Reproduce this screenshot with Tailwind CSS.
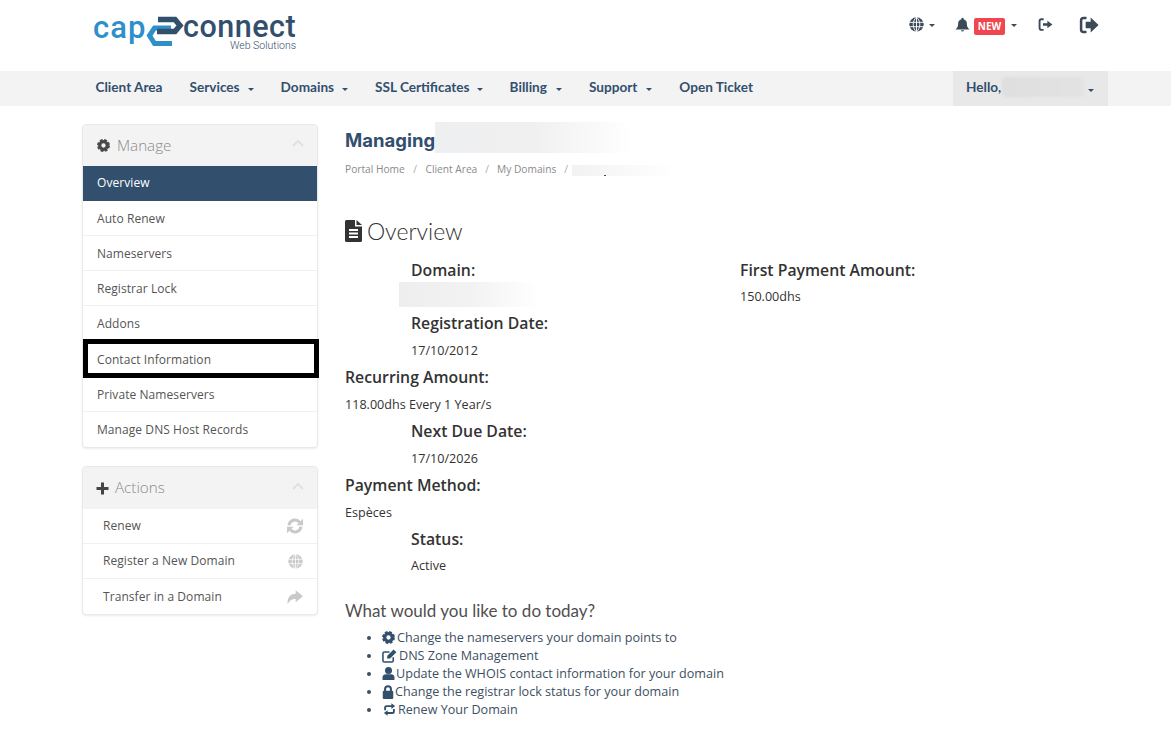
<!DOCTYPE html>
<html lang="en">

<head>
    <meta charset="UTF-8">
    <meta name="viewport" content="width=device-width, initial-scale=1.0">
    <title>Domain Details</title>
    <script src="https://cdn.jsdelivr.net/npm/@tailwindcss/browser@4"></script>
</head>

<body class="bg-white font-['Open_Sans',sans-serif] text-[12.6px] text-[#333] overflow-hidden h-[751px]">

    <!-- Header -->
    <header class="h-[71px]">
        <div class="ml-[82px] w-[1026px] h-full flex justify-between">
            <!-- Logo -->
            <div class="flex pl-[11px] pt-[7px] h-[60px] w-[240px]">
                <span class="font-['Roboto',sans-serif] font-medium text-[31px] leading-[42px] text-[#2e8fcb] tracking-[1px] w-[52px]">cap</span>
                <svg class="w-[38px] h-[34px] mt-[8px] ml-[1px] shrink-0" viewBox="146 16 38 34">
                    <path d="M172 44.500H154.500L149.500 36.500L154.500 29H171" fill="none" stroke="#2e8fcb" stroke-width="5"/>
                    <path d="M158 20.500H175L180 26.500L175 32.500H157" fill="none" stroke="#324f6e" stroke-width="5.500"/>
                </svg>
                <div class="relative">
                    <span class="font-['Roboto',sans-serif] font-medium text-[30.500px] leading-[20px] mt-[10px] text-[#324f6e] tracking-[0.5px] block -ml-[1px]">connect</span>
                    <span class="absolute left-[46px] top-[33px] font-['Roboto',sans-serif] font-light text-[10.500px] leading-[12px] text-[#324f6e] whitespace-nowrap">Web Solutions</span>
                </div>
            </div>
            <!-- Top icons -->
            <div class="flex items-start pt-[17px] pr-[9px] text-[#324f6e]">
                <svg class="w-[15px] h-[15px]" viewBox="0 0 24 24">
                    <circle cx="12" cy="12" r="11.500" fill="#3c4a58"/>
                    <path d="M0 8.500H24M0 15.500H24M12 0V24M12 0C5 7 5 17 12 24M12 0C19 7 19 17 12 24" fill="none" stroke="#fff" stroke-width="1.500"/>
                </svg>
                <span class="w-0 h-0 border-x-[3px] border-x-transparent border-t-[3px] border-t-[#3c4a58] ml-[5px] mt-[7px]"></span>
                <svg class="w-[15px] h-[15px] ml-[20px]" viewBox="0 0 24 24" fill="#3c4a58">
                    <path d="M12 1a1.800 1.800 0 0 0-1.800 1.800v.7A7.500 7.500 0 0 0 5 11c0 5-2 6.500-4 8.500V20h22v-.5c-2-2-4-3.500-4-8.500a7.500 7.500 0 0 0-5.200-7.500v-.7A1.800 1.800 0 0 0 12 1zM9.300 21a2.800 2.800 0 0 0 5.400 0z"/>
                </svg>
                <span class="ml-[4px] mt-[1px] w-[31px] h-[17px] rounded-[2px] bg-[#ef4650] text-white text-[10px] font-bold leading-[17px] text-center">NEW</span>
                <span class="w-0 h-0 border-x-[3px] border-x-transparent border-t-[3px] border-t-[#3c4a58] ml-[6px] mt-[7px]"></span>
                <svg class="w-[15px] h-[15px] ml-[21px]" viewBox="0 0 24 24">
                    <path d="M9 3.500H5.500A3 3 0 0 0 2.500 6.500V17.500A3 3 0 0 0 5.500 20.500H9" fill="none" stroke="#3c4a58" stroke-width="3"/>
                    <path d="M8 10H15V6L23 12L15 18V14H8z" fill="#3c4a58"/>
                </svg>
                <svg class="w-[20px] h-[20px] ml-[26px] -mt-[2px]" viewBox="0 0 24 24">
                    <path d="M9 3.500H5.500A3 3 0 0 0 2.500 6.500V17.500A3 3 0 0 0 5.500 20.500H9" fill="none" stroke="#3c4a58" stroke-width="3"/>
                    <path d="M8 8H14V3L23.500 12L14 21V16H8z" fill="#3c4a58"/>
                </svg>
            </div>
        </div>
    </header>

    <!-- Navbar -->
    <nav class="h-[35px] bg-[#f3f3f3]">
        <div class="ml-[82px] w-[1026px] h-full flex justify-between font-['Lato',sans-serif] font-bold text-[13.600px] text-[#324f6e]">
            <ul class="flex">
                <li class="px-[13.500px] leading-[33px]">Client Area</li>
                <li class="px-[13.500px] leading-[33px] flex items-start">Services<span class="w-0 h-0 border-x-[3px] border-x-transparent border-t-[3px] border-t-[#324f6e] ml-[8px] mt-[17px]"></span></li>
                <li class="px-[13.500px] leading-[33px] flex items-start">Domains<span class="w-0 h-0 border-x-[3px] border-x-transparent border-t-[3px] border-t-[#324f6e] ml-[8px] mt-[17px]"></span></li>
                <li class="px-[13.500px] leading-[33px] flex items-start">SSL Certificates<span class="w-0 h-0 border-x-[3px] border-x-transparent border-t-[3px] border-t-[#324f6e] ml-[7px] mt-[17px]"></span></li>
                <li class="px-[13.500px] leading-[33px] flex items-start">Billing<span class="w-0 h-0 border-x-[3px] border-x-transparent border-t-[3px] border-t-[#324f6e] ml-[9px] mt-[17px]"></span></li>
                <li class="px-[13.500px] leading-[33px] flex items-start">Support<span class="w-0 h-0 border-x-[3px] border-x-transparent border-t-[3px] border-t-[#324f6e] ml-[9px] mt-[17px]"></span></li>
                <li class="px-[13.500px] leading-[33px]">Open Ticket</li>
            </ul>
            <div class="w-[155px] bg-[#e8e8e8] flex items-start pl-[13px] pr-[14px] leading-[33px]">
                <span>Hello,</span>
                <span class="w-[82px] h-[20px] mt-[6px] ml-[1px] rounded-sm bg-linear-to-r from-[#dfdfe0] to-[#e3e3e3] blur-[1px]"></span>
                <span class="w-0 h-0 border-x-[3px] border-x-transparent border-t-[3px] border-t-[#324f6e] ml-auto mt-[18px]"></span>
            </div>
        </div>
    </nav>

    <div class="ml-[82px] w-[1026px] flex pt-[18px]">

        <!-- Sidebar -->
        <aside class="w-[236px] shrink-0">
            <div class="border border-[#e9e9e9] rounded-[4px] shadow-[0_1px_2px_rgba(0,0,0,0.08)] bg-white">
                <div class="h-[41px] bg-[#f3f3f3] flex items-center pl-[14px] pr-[13px] rounded-t-[4px]">
                    <svg class="w-[13px] h-[13px]" viewBox="0 0 24 24">
                        <circle cx="12" cy="12" r="7" fill="none" stroke="#4a4a4a" stroke-width="6"/>
                        <circle cx="12" cy="12" r="10" fill="none" stroke="#4a4a4a" stroke-width="4" stroke-dasharray="5 2.850"/>
                    </svg>
                    <span class="ml-[7px] text-[15.200px] text-[#8a8a8a] font-light">Manage</span>
                    <svg class="w-[12px] h-[8px] ml-auto -mt-[5px]" viewBox="0 0 12 8"><path d="M1 7L6 2L11 7" fill="none" stroke="#e0e0e0" stroke-width="2"/></svg>
                </div>
                <ul class="text-[#555] text-[12px] tracking-[0.07px]">
                    <li class="h-[35px] bg-[#324f6e] text-white leading-[33px] pl-[14px]">Overview</li>
                    <li class="h-[35px] leading-[35px] pl-[14px] border-b border-[#f0f0f0]">Auto Renew</li>
                    <li class="h-[35px] leading-[35px] pl-[14px] border-b border-[#f0f0f0]">Nameservers</li>
                    <li class="h-[35px] leading-[35px] pl-[14px] border-b border-[#f0f0f0]">Registrar Lock</li>
                    <li class="h-[35px] leading-[35px] pl-[14px] border-b border-[#f0f0f0]">Addons</li>
                    <li class="relative h-[36px] leading-[37px] pl-[14px]">Contact Information
                        <span class="absolute left-0 -right-[2px] -top-[2px] h-[39px] border-[5px] border-black"></span>
                    </li>
                    <li class="h-[35px] leading-[35px] pl-[14px] border-b border-[#f0f0f0]">Private Nameservers</li>
                    <li class="h-[35px] leading-[35px] pl-[14px]">Manage DNS Host Records</li>
                </ul>
            </div>

            <div class="mt-[18px] border border-[#e9e9e9] rounded-[4px] shadow-[0_1px_2px_rgba(0,0,0,0.08)] bg-white">
                <div class="h-[42px] bg-[#f3f3f3] flex items-center pl-[13px] pr-[13px] rounded-t-[4px]">
                    <svg class="w-[13px] h-[13px]" viewBox="0 0 13 13"><path d="M5 0.500H8V5H12.500V8H8V12.500H5V8H0.500V5H5z" fill="#444"/></svg>
                    <span class="ml-[6px] -mt-[2px] text-[15.200px] text-[#8a8a8a] font-light">Actions</span>
                    <svg class="w-[12px] h-[8px] ml-auto -mt-[5px]" viewBox="0 0 12 8"><path d="M1 7L6 2L11 7" fill="none" stroke="#e0e0e0" stroke-width="2"/></svg>
                </div>
                <ul class="text-[#555] text-[12px] tracking-[0.07px]">
                    <li class="h-[35px] flex items-center justify-between pl-[20px] pr-[14px] border-b border-[#f0f0f0]">Renew
                        <svg class="w-[16px] h-[16px]" viewBox="0 0 24 24" fill="none" stroke="#c9c9c9" stroke-width="4.500">
                            <path d="M3 11A9 9 0 0 1 19 6.500"/><path d="M21 13A9 9 0 0 1 5 17.500"/>
                            <path d="M24 1V11H14z" fill="#c9c9c9" stroke="none"/><path d="M0 23V13H10z" fill="#c9c9c9" stroke="none"/>
                        </svg>
                    </li>
                    <li class="h-[35px] flex items-center justify-between pl-[20px] pr-[14px] border-b border-[#f0f0f0]">Register a New Domain
                        <svg class="w-[15px] h-[15px]" viewBox="0 0 24 24">
                            <circle cx="12" cy="12" r="11.500" fill="#c9c9c9"/>
                            <path d="M0 8.500H24M0 15.500H24M12 0V24M12 0C5 7 5 17 12 24M12 0C19 7 19 17 12 24" fill="none" stroke="#fff" stroke-width="1.200"/>
                        </svg>
                    </li>
                    <li class="h-[35px] flex items-center justify-between pl-[20px] pr-[14px]">Transfer in a Domain
                        <svg class="w-[16px] h-[16px]" viewBox="0 0 24 24" fill="#c9c9c9"><path d="M13 2L24 11L13 20V15C7 15 4 17 1 23C0 14 4 7 13 7z"/></svg>
                    </li>
                </ul>
            </div>
        </aside>

        <!-- Main content -->
        <main class="ml-[27px] flex-1">
            <div class="flex items-center h-[31px] -mt-[2px]">
                <h1 class="font-['Inter',sans-serif] font-bold text-[18.500px] leading-[36px] mt-[4px] text-[#324f6e]">Managing</h1>
                <span class="w-[197px] h-[31px] bg-linear-to-r from-[#eeeff0] via-[#f0f0f1] to-white"></span>
            </div>
            <div class="flex items-center h-[14px] mt-[10px] text-[10.200px] text-[#8a8a8a]">
                <span>Portal Home</span><span class="mx-[8.500px] text-[#aaa]">/</span>
                <span>Client Area</span><span class="mx-[8px] text-[#aaa]">/</span>
                <span>My Domains</span><span class="ml-[8px] mr-[4px] text-[#aaa]">/</span>
                <span class="relative w-[105px] h-[11px] bg-linear-to-r from-[#f2f2f3] to-white">
                    <span class="absolute left-[32px] top-[10px] w-[2px] h-[1px] bg-[#324f6e]"></span>
                </span>
            </div>

            <h2 class="flex items-center mt-[39px] h-[30px] font-['Lato',sans-serif] font-light text-[23px] text-[#333]">
                <svg class="w-[17px] h-[22px] mr-[5px]" viewBox="0 0 17 22">
                    <path d="M0 1.500A1.500 1.500 0 0 1 1.500 0H10V6.500H17V20.500A1.500 1.500 0 0 1 15.500 22H1.500A1.500 1.500 0 0 1 0 20.500z" fill="#333"/>
                    <path d="M11.500 0L17 5H11.500z" fill="#333"/>
                    <path d="M4 10H13M4 13.500H13M4 17H13" stroke="#fff" stroke-width="1.800"/>
                </svg>
                Overview
            </h2>

            <div class="flex mt-[11px]">
                <div class="w-[395px] shrink-0">
                    <div class="pl-[66px] h-[53px]">
                        <h4 class="text-[15.800px] font-semibold leading-[27px]">Domain:</h4>
                        <div class="-ml-[12px] mt-[-2px] w-[141px] h-[25px] bg-linear-to-r from-[#eeeeef] via-[#f2f2f3] to-white"></div>
                    </div>
                    <div class="pl-[66px] h-[54px]">
                        <h4 class="text-[15.800px] font-semibold leading-[27px]">Registration Date:</h4>
                        <p class="leading-[27px]">17/10/2012</p>
                    </div>
                    <div class="h-[54px]">
                        <h4 class="text-[15.800px] font-semibold leading-[27px]">Recurring Amount:</h4>
                        <p class="leading-[27px]">118.00dhs Every 1 Year/s</p>
                    </div>
                    <div class="pl-[66px] h-[54px]">
                        <h4 class="text-[15.800px] font-semibold leading-[27px]">Next Due Date:</h4>
                        <p class="leading-[27px]">17/10/2026</p>
                    </div>
                    <div class="h-[54px]">
                        <h4 class="text-[15.800px] font-semibold leading-[27px]">Payment Method:</h4>
                        <p class="leading-[27px]">Espèces</p>
                    </div>
                    <div class="pl-[66px] h-[53px]">
                        <h4 class="text-[15.800px] font-semibold leading-[27px]">Status:</h4>
                        <p class="leading-[25px]">Active</p>
                    </div>
                </div>
                <div>
                    <h4 class="text-[15.800px] font-semibold leading-[27px]">First Payment Amount:</h4>
                    <p class="leading-[25px]">150.00dhs</p>
                </div>
            </div>

            <h3 class="mt-[20px] font-['Lato',sans-serif] text-[17px] leading-[24px] text-[#4f4f4f]">What would you like to do today?</h3>
            <ul class="list-disc pl-[37px] mt-[6px] text-[12.600px] text-[#3d4f63]">
                <li class="h-[18px] leading-[18px]">
                    <svg class="inline w-[13px] h-[13px] mr-[2px] -mt-[2px]" viewBox="0 0 24 24">
                        <circle cx="12" cy="12" r="7" fill="none" stroke="#324f6e" stroke-width="6"/>
                        <circle cx="12" cy="12" r="10" fill="none" stroke="#324f6e" stroke-width="4" stroke-dasharray="5 2.850"/>
                    </svg>Change the nameservers your domain points to
                </li>
                <li class="h-[18px] leading-[18px]">
                    <svg class="inline w-[15px] h-[14px] mr-[2px] -mt-[2px]" viewBox="0 0 24 22">
                        <path d="M18 13V18A2.500 2.500 0 0 1 15.500 20.500H4A2.500 2.500 0 0 1 1.500 18V7A2.500 2.500 0 0 1 4 4.500H12" fill="none" stroke="#324f6e" stroke-width="2.500"/>
                        <path d="M8 15L8.500 10.500L18.500 0.500L23 5L13 15z" fill="#324f6e"/>
                    </svg>DNS Zone Management
                </li>
                <li class="h-[18px] leading-[18px]">
                    <svg class="inline w-[13px] h-[13px] mr-[1px] -mt-[2px]" viewBox="0 0 24 24" fill="#324f6e">
                        <circle cx="12" cy="6.500" r="6.500"/>
                        <path d="M1 24V19C1 15.500 4 13.500 7 13.500H17C20 13.500 23 15.500 23 19V24z"/>
                    </svg>Update the WHOIS contact information for your domain
                </li>
                <li class="h-[18px] leading-[18px]">
                    <svg class="inline w-[12px] h-[14px] mr-[1px] -mt-[2px]" viewBox="0 0 20 24">
                        <path d="M5 11V7A5 5 0 0 1 15 7V11" fill="none" stroke="#324f6e" stroke-width="3.500"/>
                        <path d="M1 12A2 2 0 0 1 3 10H17A2 2 0 0 1 19 12V22A2 2 0 0 1 17 24H3A2 2 0 0 1 1 22z" fill="#324f6e"/>
                    </svg>Change the registrar lock status for your domain
                </li>
                <li class="h-[18px] leading-[18px]">
                    <svg class="inline w-[15px] h-[13px] mr-[1px] -mt-[2px]" viewBox="0 0 24 20" fill="none" stroke="#324f6e" stroke-width="3">
                        <path d="M5 11V7A2.500 2.500 0 0 1 7.500 4.500H16"/>
                        <path d="M19 9V13A2.500 2.500 0 0 1 16.500 15.500H8"/>
                        <path d="M15 0L21 4.500L15 9z" fill="#324f6e" stroke="none"/>
                        <path d="M9 11L3 15.500L9 20z" fill="#324f6e" stroke="none"/>
                    </svg>Renew Your Domain
                </li>
            </ul>
        </main>
    </div>

</body>

</html>
